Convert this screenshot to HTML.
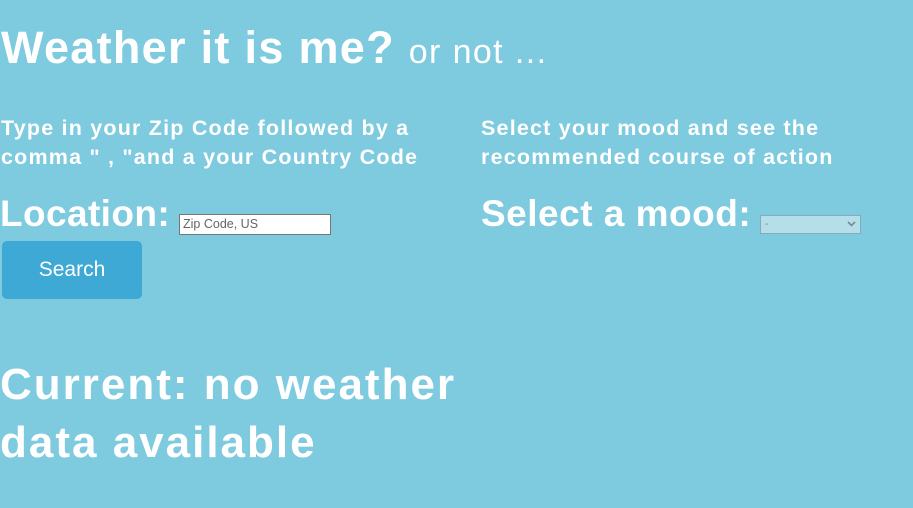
<!DOCTYPE html>
<html><head><style>
body{margin:0;width:913px;height:508px;background:#7ecadf;font-family:"Liberation Sans",sans-serif;color:#fff;position:relative;overflow:hidden}
div{position:absolute;white-space:nowrap}
.b{font-weight:bold}
</style></head><body>
<div class="b" style="left:1px;top:22px;font-size:45px;letter-spacing:1.3px">Weather it is me? <span style="font-weight:normal;font-size:34px;letter-spacing:1.4px">or not ...</span></div>
<div class="b" style="left:1px;top:114px;font-size:21.5px;line-height:29px;letter-spacing:1.2px">Type in your Zip Code followed by a<br>comma " , "and a your Country Code</div>
<div class="b" style="left:481px;top:114px;font-size:21.5px;line-height:29px;letter-spacing:1.2px">Select your mood and see the<br>recommended course of action</div>
<div class="b" style="left:0px;top:193px;font-size:37px;letter-spacing:0.4px">Location:</div>
<div style="left:179px;top:214px;width:152px;height:21px;background:#fff;border:1px solid #777;box-sizing:border-box;color:#666;font-size:12.5px;line-height:19px;padding-left:3px">Zip Code, US</div>
<div style="left:2px;top:241px;width:140px;height:58px;background:#3da9d4;border-radius:5px;font-size:21px;line-height:58px;text-align:center">Search</div>
<div class="b" style="left:481px;top:193px;font-size:37px;letter-spacing:0.5px">Select a mood:</div>
<div style="left:760px;top:215px;width:101px;height:19px;background:#b4dfe9;border:1px solid #8ab;box-sizing:border-box;color:#889;font-size:11px;line-height:17px;padding-left:4px">-<svg style="position:absolute;right:4px;top:5px" width="9" height="6" viewBox="0 0 9 6"><path d="M1 1l3.5 3.5L8 1" stroke="#789" stroke-width="1.6" fill="none"/></svg></div>
<div class="b" style="left:0px;top:356px;font-size:44px;line-height:58px;letter-spacing:2px">Current: no weather<br>data available</div>
</body></html>
